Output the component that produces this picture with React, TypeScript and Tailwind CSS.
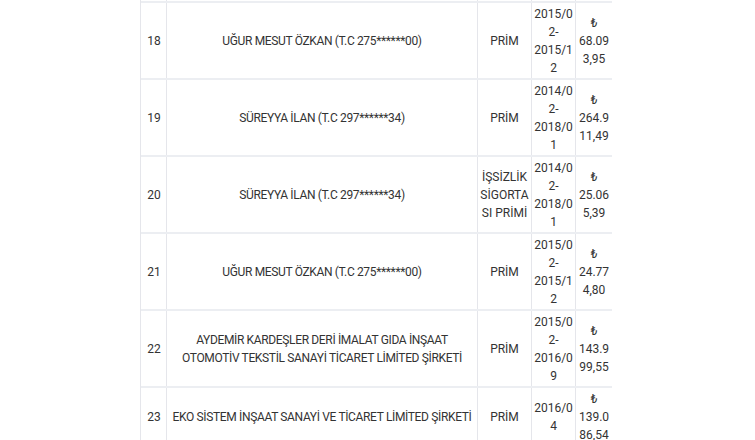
import React from "react";

type Row = {
  no: number;
  name: string[];
  type: string[];
  period: string[];
  amount: string[];
};

const ROWS: Row[] = [
  { no: 18, name: ["UĞUR MESUT ÖZKAN (T.C 275******00)"], type: ["PRİM"], period: ["2015/0", "2-", "2015/1", "2"], amount: ["₺", "68.09", "3,95"] },
  { no: 19, name: ["SÜREYYA İLAN (T.C 297******34)"], type: ["PRİM"], period: ["2014/0", "2-", "2018/0", "1"], amount: ["₺", "264.9", "11,49"] },
  { no: 20, name: ["SÜREYYA İLAN (T.C 297******34)"], type: ["İŞSİZLİK", "SİGORTA", "SI PRİMİ"], period: ["2014/0", "2-", "2018/0", "1"], amount: ["₺", "25.06", "5,39"] },
  { no: 21, name: ["UĞUR MESUT ÖZKAN (T.C 275******00)"], type: ["PRİM"], period: ["2015/0", "2-", "2015/1", "2"], amount: ["₺", "24.77", "4,80"] },
  {
    no: 22,
    name: ["AYDEMİR KARDEŞLER DERİ İMALAT GIDA İNŞAAT", "OTOMOTİV TEKSTİL SANAYİ TİCARET LİMİTED ŞİRKETİ"],
    type: ["PRİM"],
    period: ["2015/0", "2-", "2016/0", "9"],
    amount: ["₺", "143.9", "99,55"],
  },
  { no: 23, name: ["EKO SİSTEM İNŞAAT SANAYİ VE TİCARET LİMİTED ŞİRKETİ"], type: ["PRİM"], period: ["2016/0", "4"], amount: ["₺", "139.0", "86,54"] },
];

const GRID = "grid grid-cols-[25px_311px_54px_44px_37px]";
const CELL = "flex flex-col items-center justify-center py-[1.5px] text-center";

function Lines({ lines, className }: { lines: string[]; className?: string }) {
  return (
    <>
      {lines.map((l, i) => (
        <span key={i} className={"whitespace-nowrap " + (className ?? "")}>
          {l}
        </span>
      ))}
    </>
  );
}

export default function App() {
  return (
    <div className="h-[440px] overflow-hidden bg-white pl-[140px] font-['Roboto','Liberation_Sans',sans-serif] text-[12px] leading-[18px] text-[#333]">
      <div className="w-[472px] border-l border-[#e5e6eb]">
        {/* 前の行の下端 */}
        <div className={GRID + " h-[1px]"}>
          <div />
          <div className="border-l border-[#e5e6eb]" />
          <div className="border-l border-[#e5e6eb]" />
          <div className="border-l border-[#e5e6eb]" />
          <div className="border-l border-[#e5e6eb]" />
        </div>

        {ROWS.map((r) => (
          <div key={r.no} className={GRID + " border-t-2 border-[#eceef2]"}>
            <div className={CELL + " pl-[1px]"}>{r.no}</div>
            <div className={CELL + " border-l border-[#e5e6eb] tracking-[-0.35px]"}>
              <Lines lines={r.name} />
            </div>
            <div className={CELL + " border-l border-[#e5e6eb]"}>
              <Lines lines={r.type} />
            </div>
            <div className={CELL + " border-l border-[#e5e6eb]"}>
              <Lines lines={r.period} />
            </div>
            <div className={CELL + " border-l border-[#e5e6eb]"}>
              <Lines lines={r.amount} />
            </div>
          </div>
        ))}
      </div>
    </div>
  );
}
